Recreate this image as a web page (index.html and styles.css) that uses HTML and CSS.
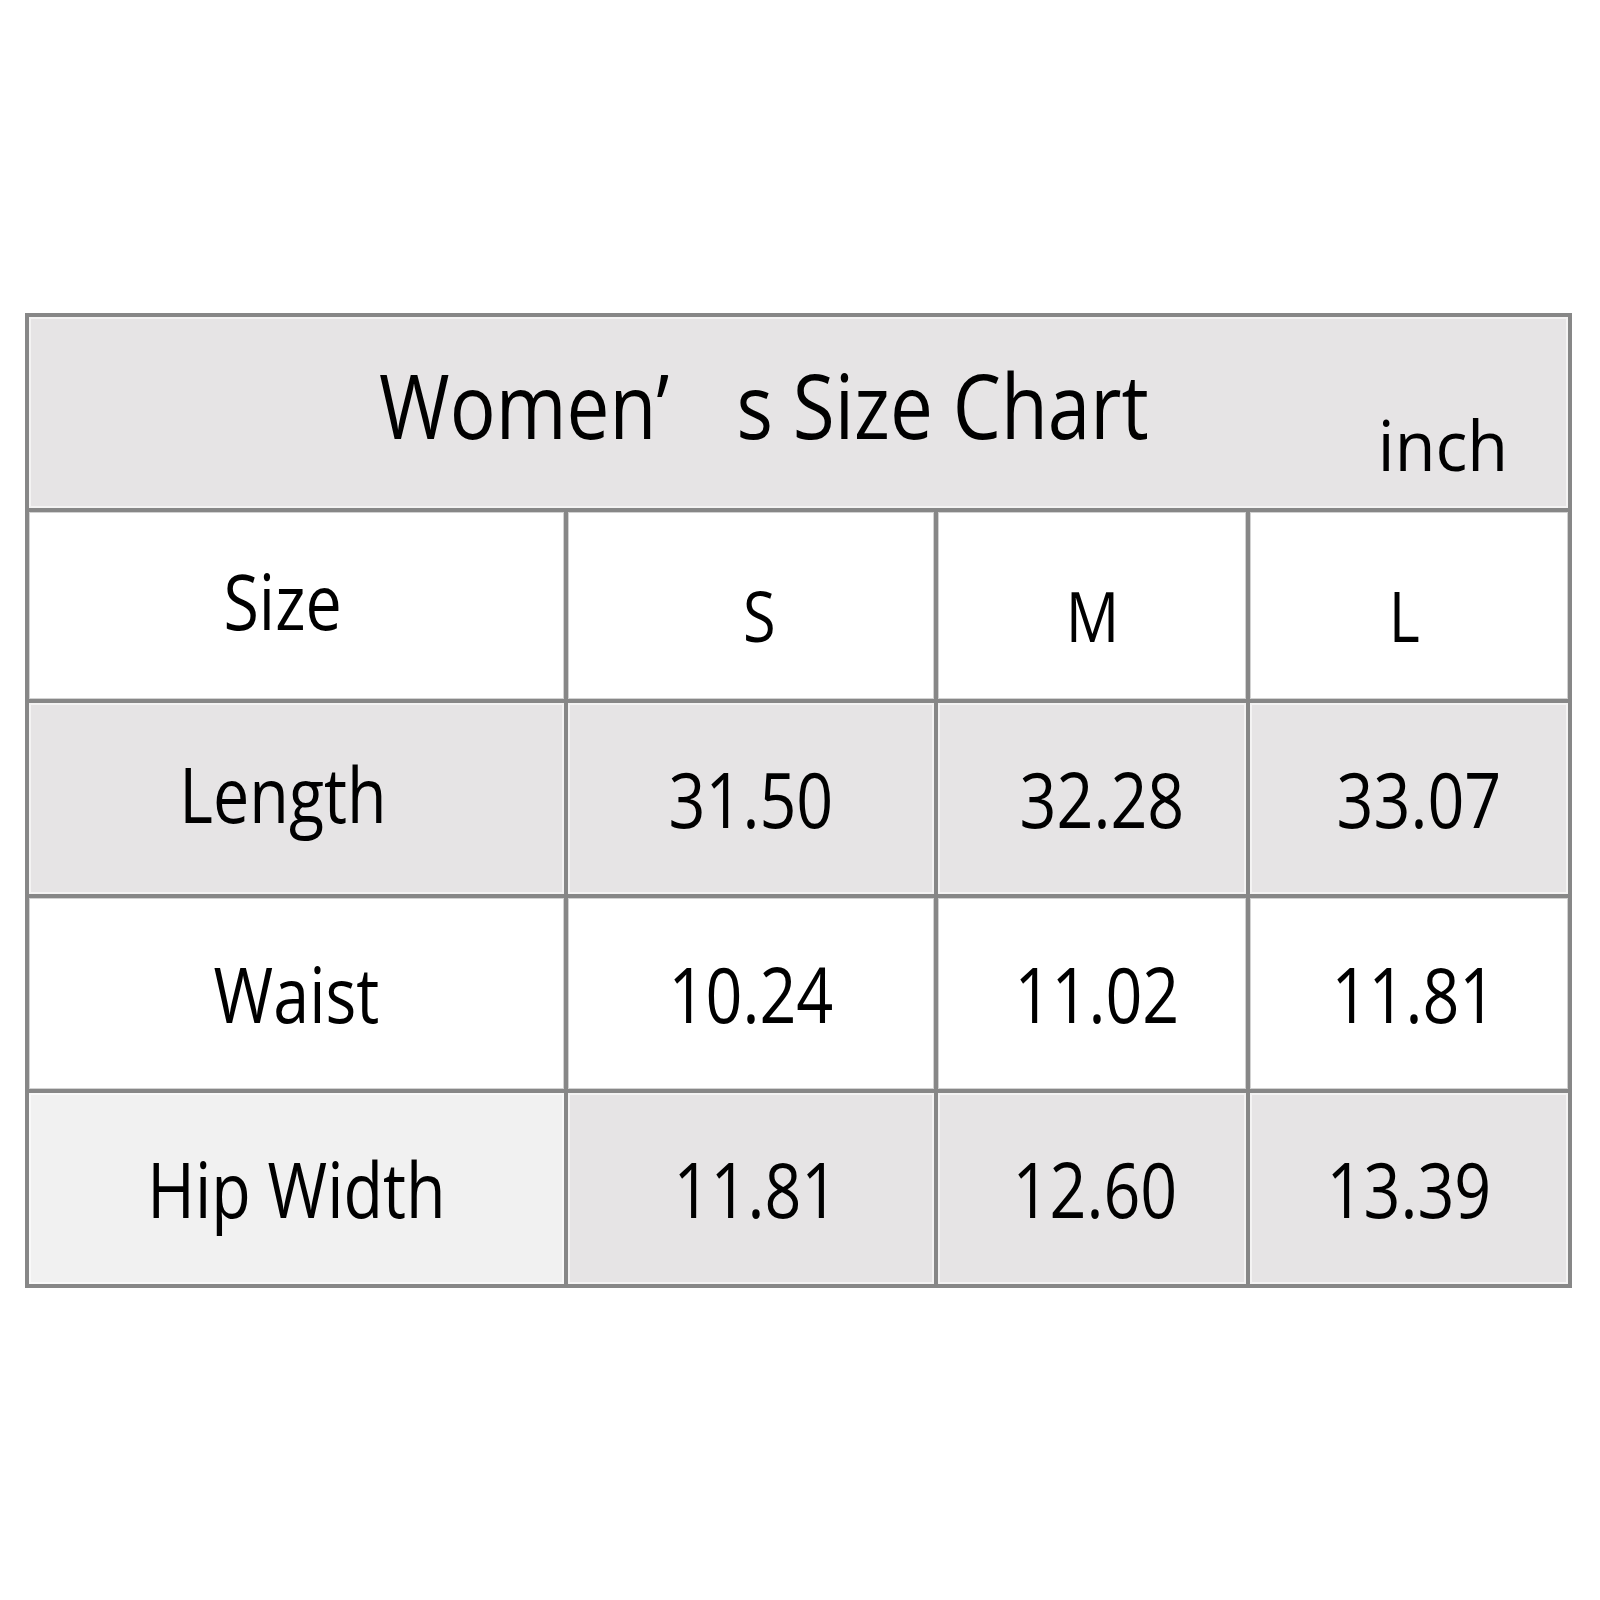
FILE: index.html
```html
<!DOCTYPE html>
<html lang="en">
<head>
<meta charset="utf-8">
<title>Women's Size Chart</title>
<link rel="stylesheet" href="styles.css">
</head>
<body>
<div class="page">
  <div class="chart">
    <div class="cell head">
      <h1 class="title">Women’<span class="wide"> </span>s Size Chart</h1>
      <span class="unit">inch</span>
    </div>

    <div class="cell white up"><span class="t">Size</span></div>
    <div class="cell white size push-r"><span class="t">S</span></div>
    <div class="cell white size"><span class="t">M</span></div>
    <div class="cell white size push-l"><span class="t">L</span></div>

    <div class="cell gray up"><span class="t">Length</span></div>
    <div class="cell gray"><span class="t">31.50</span></div>
    <div class="cell gray push-r-lg"><span class="t">32.28</span></div>
    <div class="cell gray push-r-lg"><span class="t">33.07</span></div>

    <div class="cell white"><span class="t">Waist</span></div>
    <div class="cell white"><span class="t">10.24</span></div>
    <div class="cell white push-r-sm"><span class="t">11.02</span></div>
    <div class="cell white push-r-sm"><span class="t">11.81</span></div>

    <div class="cell light"><span class="t">Hip Width</span></div>
    <div class="cell gray push-r-sm"><span class="t">11.81</span></div>
    <div class="cell gray push-r-xs"><span class="t">12.60</span></div>
    <div class="cell gray"><span class="t">13.39</span></div>
  </div>
</div>
</body>
</html>
```

FILE: styles.css
```css
html, body {
  margin: 0;
  padding: 0;
  background: #ffffff;
}

body {
  font-family: "Open Sans", "Noto Sans", sans-serif;
  color: #000000;
}

.page {
  width: 1600px;
  height: 1600px;
  padding: 313px 0 0 25px;
  box-sizing: border-box;
}

.chart {
  width: 1547px;
  display: grid;
  grid-template-columns: 535px 366px 308px 318px;
  grid-template-rows: 191px 187px 191px 191px 191px;
  gap: 4px;
  padding: 4px;
  box-sizing: border-box;
  background: #878787;
}

.cell {
  display: flex;
  align-items: center;
  justify-content: center;
  font-size: 76px;
  line-height: 1;
  box-shadow: inset 0 0 0 2px rgba(255, 255, 255, 0.55);
}

.t {
  display: inline-block;
  white-space: nowrap;
  transform: scaleX(0.85);
}

.white { background: #ffffff; box-shadow: inset 0 0 0 1px #d2d2d2; }
.gray { background: #e6e4e5; }
.light { background: #f1f1f1; }

.head {
  grid-column: 1 / -1;
  background: #e6e4e5;
  justify-content: flex-start;
  align-items: flex-start;
}

.title {
  margin: 42px 0 0 350px;
  font-size: 90px;
  font-weight: 400;
  line-height: 1;
  white-space: nowrap;
  transform: scaleX(0.85);
  transform-origin: left center;
}

.wide {
  display: inline-block;
  width: 79px;
}

.unit {
  margin: 92px 60px 0 auto;
  font-size: 70px;
  line-height: 1;
  transform: scaleX(0.95);
  transform-origin: right center;
}

.size {
  font-size: 70px;
  padding-top: 18px;
}

.up { padding-bottom: 9px; padding-right: 28px; }
.push-r { padding-left: 16px; }
.push-r-lg { padding-left: 20px; }
.push-r-sm { padding-left: 10px; }
.push-r-xs { padding-left: 6px; }
.push-l { padding-right: 10px; }
```
